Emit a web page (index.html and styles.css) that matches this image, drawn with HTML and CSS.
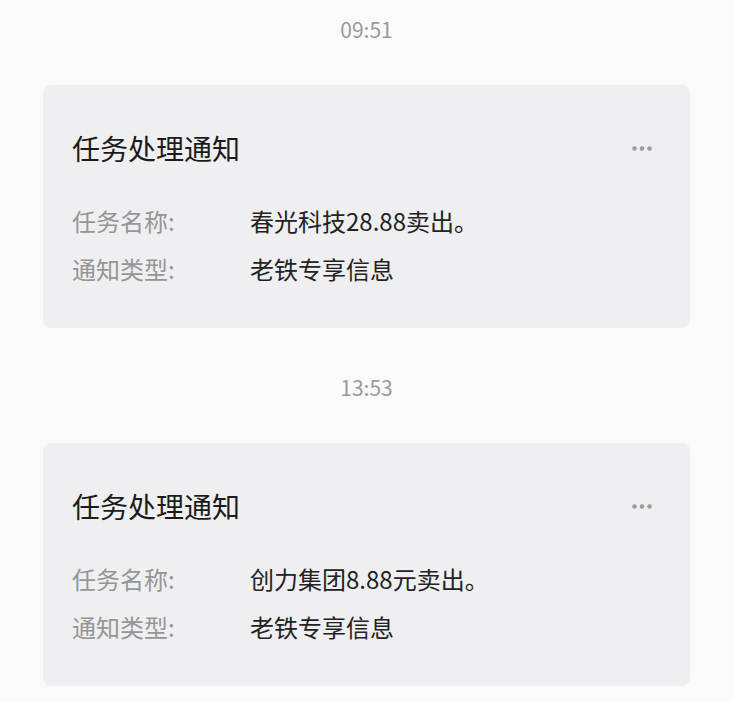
FILE: index.html
```html
<!DOCTYPE html>
<html lang="zh-CN">
<head>
<meta charset="utf-8">
<title>任务处理通知</title>
<link rel="stylesheet" href="styles.css">
</head>
<body>
<div class="feed">
  <div class="msg">
    <div class="time">09:51</div>
    <div class="card">
      <div class="card-head">
        <div class="title">任务处理通知</div>
        <svg class="more" width="20" height="5" viewBox="0 0 20 5"><circle cx="2.5" cy="2.5" r="2.3"/><circle cx="10" cy="2.5" r="2.3"/><circle cx="17.5" cy="2.5" r="2.3"/></svg>
      </div>
      <div class="row"><span class="label">任务名称:</span><span class="value">春光科技28.88卖出。</span></div>
      <div class="row"><span class="label">通知类型:</span><span class="value">老铁专享信息</span></div>
    </div>
  </div>
  <div class="msg">
    <div class="time">13:53</div>
    <div class="card">
      <div class="card-head">
        <div class="title">任务处理通知</div>
        <svg class="more" width="20" height="5" viewBox="0 0 20 5"><circle cx="2.5" cy="2.5" r="2.3"/><circle cx="10" cy="2.5" r="2.3"/><circle cx="17.5" cy="2.5" r="2.3"/></svg>
      </div>
      <div class="row"><span class="label">任务名称:</span><span class="value">创力集团8.88元卖出。</span></div>
      <div class="row"><span class="label">通知类型:</span><span class="value">老铁专享信息</span></div>
    </div>
  </div>
</div>
</body>
</html>
```

FILE: styles.css
```css
html, body {
  margin: 0;
  padding: 0;
  background: #fafafa;
}
body {
  font-family: "Noto Sans CJK SC", "Noto Sans", sans-serif;
  width: 733px;
  height: 702px;
  overflow: hidden;
}
.feed {
  padding-top: 15px;
}
.msg + .msg {
  margin-top: 45px;
}
.time {
  text-align: center;
  font-size: 21px;
  line-height: 28px;
  color: #9a9a9a;
  margin-bottom: 42px;
}
.card {
  margin: 0 43px;
  background: #efeff1;
  border-radius: 8px;
  padding: 45px 38px 35px 29px;
}
.card-head {
  display: flex;
  justify-content: space-between;
  align-items: center;
  height: 36px;
  margin-bottom: 31px;
}
.title {
  font-size: 28px;
  line-height: 36px;
  color: #1b1b1b;
}
.more {
  fill: #9c9c9c;
  display: block;
}
.row {
  display: flex;
  font-size: 24px;
  line-height: 48px;
  height: 48px;
}
.label {
  width: 178px;
  flex: none;
  color: #959595;
}
.value {
  color: #222222;
}
```
